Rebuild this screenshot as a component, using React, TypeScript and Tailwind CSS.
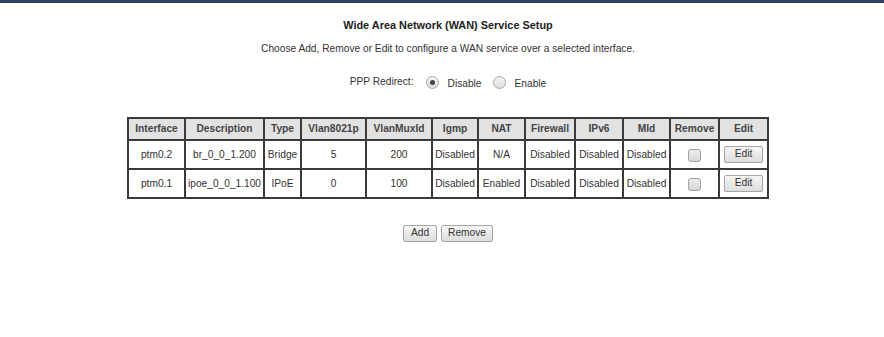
import { useState } from 'react';

type Row = {
  iface: string;
  desc: string;
  type: string;
  vlanP: string;
  muxId: string;
  igmp: string;
  nat: string;
  firewall: string;
  ipv6: string;
  mld: string;
};

const rows: Row[] = [
  { iface: 'ptm0.2', desc: 'br_0_0_1.200', type: 'Bridge', vlanP: '5', muxId: '200', igmp: 'Disabled', nat: 'N/A', firewall: 'Disabled', ipv6: 'Disabled', mld: 'Disabled' },
  { iface: 'ptm0.1', desc: 'ipoe_0_0_1.100', type: 'IPoE', vlanP: '0', muxId: '100', igmp: 'Disabled', nat: 'Enabled', firewall: 'Disabled', ipv6: 'Disabled', mld: 'Disabled' },
];

const headers = [
  { label: 'Interface', w: 'w-[57px]' },
  { label: 'Description', w: 'w-[79px]' },
  { label: 'Type', w: 'w-[37px]' },
  { label: 'Vlan8021p', w: 'w-[65px]' },
  { label: 'VlanMuxId', w: 'w-[66px]' },
  { label: 'Igmp', w: 'w-[46px]' },
  { label: 'NAT', w: 'w-[47px]' },
  { label: 'Firewall', w: 'w-[50px]' },
  { label: 'IPv6', w: 'w-[48px]' },
  { label: 'Mld', w: 'w-[47px]' },
  { label: 'Remove', w: 'w-[49px]' },
  { label: 'Edit', w: 'w-[49px]' },
];

const Radio = ({ checked }: { checked: boolean }) => (
  <span className="inline-flex h-[13px] w-[13px] items-center justify-center rounded-full border border-[#a9a9a9] bg-gradient-to-b from-[#f4f4f4] to-[#dcdcdc]">
    {checked && <span className="h-[5px] w-[5px] rounded-full bg-[#444]" />}
  </span>
);

const Checkbox = () => (
  <span className="inline-block h-[13px] w-[13px] rounded-[3px] border border-[#a0a0a0] bg-gradient-to-b from-[#eeeeee] to-[#d6d6d6] align-middle" />
);

const GrayButton = ({ children, className }: { children: string; className?: string }) => (
  <button className={`h-[17px] rounded-[2px] border border-[#a6a6a6] bg-gradient-to-b from-[#f6f6f6] to-[#dddddd] px-[6px] text-[10.2px] leading-none text-[#333] ${className ?? ''}`}>
    {children}
  </button>
);

export default function App() {
  const [redirect, setRedirect] = useState(false);

  return (
    <div className="h-[337px] w-[884px] bg-white font-['Liberation_Sans',Arial,sans-serif] text-[10.2px] text-[#333]">
      <div className="h-[3px] bg-[#2e4466]" />

      <div className="flex flex-col items-center pl-[12px]">
        <h1 className="mt-[15px] text-[10.9px] font-bold leading-[14px] text-[#222]">Wide Area Network (WAN) Service Setup</h1>
        <p className="mt-[10px] leading-[14px]">
          Choose Add, Remove or Edit to configure a WAN service over a selected interface.
        </p>

        <div className="mt-[17px] flex items-center leading-[14px]">
          <span className="mr-[12px]">PPP Redirect:</span>
          <label className="flex items-center" onClick={() => setRedirect(false)}>
            <Radio checked={!redirect} />
            <span className="ml-[9px] mt-[4px]">Disable</span>
          </label>
          <label className="ml-[11px] flex items-center" onClick={() => setRedirect(true)}>
            <Radio checked={redirect} />
            <span className="ml-[9px] mt-[4px]">Enable</span>
          </label>
        </div>

        <table className="mt-[26px] table-fixed border-collapse border-2 border-[#3a3a3a]">
          <thead>
            <tr className="h-[22px] bg-[#e2e2e2]">
              {headers.map((h) => (
                <th key={h.label} className={`${h.w} border-2 border-[#3a3a3a] p-0 text-center font-bold text-[#444]`}>
                  {h.label}
                </th>
              ))}
            </tr>
          </thead>
          <tbody>
            {rows.map((r) => (
              <tr key={r.iface} className="h-[29px] text-center">
                <td className="border-2 border-[#3a3a3a] p-0">{r.iface}</td>
                <td className="border-2 border-[#3a3a3a] p-0">{r.desc}</td>
                <td className="border-2 border-[#3a3a3a] p-0">{r.type}</td>
                <td className="border-2 border-[#3a3a3a] p-0">{r.vlanP}</td>
                <td className="border-2 border-[#3a3a3a] p-0">{r.muxId}</td>
                <td className="border-2 border-[#3a3a3a] p-0">{r.igmp}</td>
                <td className="border-2 border-[#3a3a3a] p-0">{r.nat}</td>
                <td className="border-2 border-[#3a3a3a] p-0">{r.firewall}</td>
                <td className="border-2 border-[#3a3a3a] p-0">{r.ipv6}</td>
                <td className="border-2 border-[#3a3a3a] p-0">{r.mld}</td>
                <td className="border-2 border-[#3a3a3a] p-0">
                  <Checkbox />
                </td>
                <td className="border-2 border-[#3a3a3a] p-0">
                  <GrayButton className="w-[39px]">Edit</GrayButton>
                </td>
              </tr>
            ))}
          </tbody>
        </table>

        <div className="mt-[26px] flex gap-[4px]">
          <GrayButton className="w-[34px]">Add</GrayButton>
          <GrayButton className="w-[52px]">Remove</GrayButton>
        </div>
      </div>
    </div>
  );
}
